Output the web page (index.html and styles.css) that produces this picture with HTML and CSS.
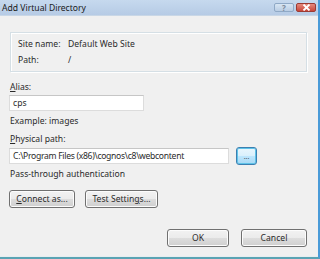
FILE: index.html
```html
<!DOCTYPE html>
<html lang="en">
<head>
    <meta charset="UTF-8">
    <title>Add Virtual Directory</title>
    <link rel="stylesheet" href="styles.css">
</head>
<body>

<div class="window">
    <div class="titlebar">
        <span class="title">Add Virtual Directory</span>
        <div class="caption">
            <span class="cap-btn cap-help">?</span>
            <span class="cap-btn cap-close">
                <svg width="9" height="7" viewBox="0 0 9 7"><path d="M1.5 0.5 L7.5 6.5 M7.5 0.5 L1.5 6.5" stroke="#fff" stroke-width="1.8"/></svg>
            </span>
        </div>
    </div>

    <div class="content">
        <div class="groupbox">
            <div class="info-row"><span class="info-label">Site name:</span><span>Default Web Site</span></div>
            <div class="info-row"><span class="info-label">Path:</span><span>/</span></div>
        </div>

        <label class="field-label lbl-alias"><u>A</u>lias:</label>
        <div class="textbox tb-alias">cps</div>
        <div class="hint">Example: images</div>

        <label class="field-label lbl-path"><u>P</u>hysical path:</label>
        <div class="path-row">
            <div class="textbox tb-path">C:\Program Files (x86)\cognos\c8\webcontent</div>
            <button class="btn btn-browse">...</button>
        </div>
        <div class="hint hint-auth">Pass-through authentication</div>

        <div class="btn-row">
            <button class="btn btn-connect"><u>C</u>onnect as...</button>
            <button class="btn btn-test">Test Settin<u>g</u>s...</button>
        </div>

        <div class="footer">
            <button class="btn btn-ok">OK</button>
            <button class="btn btn-cancel">Cancel</button>
        </div>
    </div>
</div>

</body>
</html>
```

FILE: styles.css
```css
body {
    margin: 0;
    font-family: 'Noto Sans', 'Open Sans', sans-serif;
    font-size: 8.6px;
    color: #2a2a2a;
    background-color: #f0f0f0;
}
.window {
    width: 320px;
    height: 259px;
    overflow: hidden;
    box-sizing: border-box;
    background-color: #f0f0f0;
    border-right: 2px solid #4a9bd8;
    border-bottom: 2px solid #5aa3b3;
    box-shadow: inset 0 -1px 0 #e6eef0;
}
.titlebar {
    height: 15px;
    display: flex;
    align-items: center;
    justify-content: space-between;
    background: linear-gradient(to bottom, #c6d9ee, #b6cbe5);
    border-bottom: 1px solid #c9d7e6;
}
.title {
    margin-left: 2px;
    font-size: 8.6px;
    color: #1a1a1a;
}
.caption {
    display: flex;
    gap: 2px;
    margin-right: 2px;
}
.cap-btn {
    width: 20px;
    height: 9px;
    border-radius: 2px;
    display: flex;
    align-items: center;
    justify-content: center;
    box-sizing: border-box;
}
.cap-help {
    background: linear-gradient(to bottom, #d8e6f4, #b9cde3);
    border: 1px solid #8fa9c6;
    color: #7d8a99;
    font-size: 8px;
    font-weight: bold;
}
.cap-close {
    background: linear-gradient(to bottom, #e58a7e, #c9463a);
    border: 1px solid #9c3b33;
}
.content {
    padding: 0 11px 0 9px;
    display: flex;
    flex-direction: column;
}
.groupbox {
    margin: 16px 0 0 1px;
    padding: 3px 8px 3px 7px;
    border: 1px solid #d5dfe5;
    box-shadow: inset 1px 1px 0 #fff, 1px 1px 0 #fff;
}
.info-row {
    display: flex;
    line-height: 16px;
}
.info-label {
    width: 50px;
}
.field-label {
    line-height: 14px;
    margin-left: 1px;
}
.lbl-alias {
    margin-top: 8px;
}
.lbl-path {
    margin-top: 4px;
}
.textbox {
    height: 16px;
    line-height: 14px;
    box-sizing: border-box;
    background-color: #fff;
    border: 1px solid #dcdcdc;
    border-top-color: #c6c6c6;
    padding: 0 3px;
    white-space: nowrap;
    overflow: hidden;
}
.tb-alias {
    width: 135px;
    margin-top: 1px;
}
.hint {
    line-height: 14px;
    margin-top: 3px;
    margin-left: 1px;
}
.path-row {
    display: flex;
    align-items: center;
    gap: 7px;
    margin-top: 1px;
}
.tb-path {
    width: 220px;
    letter-spacing: -0.3px;
}
.btn {
    font-family: inherit;
    font-size: 8.6px;
    color: #2a2a2a;
    height: 18px;
    padding: 0;
    box-sizing: border-box;
    border: 1px solid #707070;
    border-radius: 3px;
    background: linear-gradient(to bottom, #f2f2f2 0%, #ebebeb 50%, #dddddd 51%, #cfcfcf 100%);
    box-shadow: inset 0 0 0 1px #fcfcfc;
}
.btn-browse {
    width: 21px;
    border-color: #3c7fb1;
    background: linear-gradient(to bottom, #eaf6fd 0%, #d9f0fc 50%, #bee6fd 51%, #a7d9f5 100%);
    box-shadow: inset 0 0 0 1px #5fc3e8;
    font-size: 7px;
    color: #555;
}
.hint-auth {
    margin-top: 2px;
}
.btn-row {
    display: flex;
    gap: 10px;
    margin-top: 9px;
}
.btn-connect {
    width: 66px;
}
.btn-test {
    width: 73px;
}
.footer {
    display: flex;
    justify-content: flex-end;
    gap: 12px;
    margin-top: 21px;
}
.btn-ok {
    width: 62px;
}
.btn-cancel {
    width: 66px;
}
```
